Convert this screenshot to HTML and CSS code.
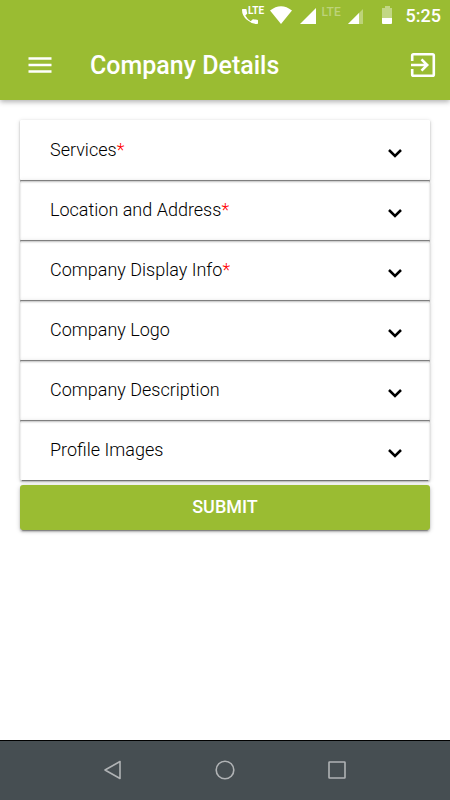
FILE: index.html
```html
<!DOCTYPE html>
<html lang="en">
<head>
<meta charset="utf-8">
<meta name="viewport" content="width=device-width, initial-scale=1">
<title>Company Details</title>
<link rel="stylesheet" href="styles.css">
</head>
<body>
<header class="top">
  <div class="status">
    <svg width="24" height="20" viewBox="0 0 24 20" aria-hidden="true">
      <path fill="#fff" d="M0 4Q0 3 .600 3H3.800Q4.500 3 4.600 3.700Q4.700 5.500 5.200 7Q5.300 7.500 4.900 7.900L3.300 9.600Q5.300 13.300 8.700 15.200L10.500 13.400Q10.900 13 11.400 13.200Q13.100 13.700 15 13.700Q16 13.800 16 14.500V17.200Q16 18 15.200 18Q9.500 18 4.800 13.800Q0 9.500 0 4Z"/>
      <text class="lte-small" x="6" y="8">LTE</text>
    </svg>
    <svg width="22" height="20" viewBox="0 0 22 20" aria-hidden="true"><path fill="#fff" d="M0 4.500Q11-4 22 4.500L11 18Z"/></svg>
    <svg width="18" height="20" viewBox="0 0 18 20" aria-hidden="true"><path fill="#fff" d="M18 2V18H2Z"/></svg>
    <span class="lte">LTE</span>
    <svg width="16" height="20" viewBox="0 0 16 20" aria-hidden="true"><path fill="#fff" fill-opacity=".35" d="M15 3V18H0Z"/><path fill="#fff" d="M11 7V18H0Z"/></svg>
    <svg width="30" height="20" viewBox="0 0 30 20" aria-hidden="true"><path fill="#fff" fill-opacity=".4" d="M15 0H20V2H22V12H12V2H15Z"/><path fill="#fff" d="M12 12H22V17Q22 18 21 18H13Q12 18 12 17Z"/></svg>
    <time class="clock">5:25</time>
  </div>
  <div class="bar">
    <button class="icon-button" type="button" aria-label="Menu">
      <svg width="24" height="24" viewBox="0 0 24 24"><path fill="none" stroke="#fff" stroke-width="2.300" d="M.5 5.500H23.500M.5 12H23.500M.5 18.500H23.500"/></svg>
    </button>
    <h1 class="title">Company Details</h1>
    <button class="icon-button" type="button" aria-label="Log out">
      <svg width="26" height="26" viewBox="0 0 26 26"><path fill="none" stroke="#fff" stroke-width="2.600" stroke-linejoin="round" d="M2.200 9V3.500Q2.200 2.200 3.500 2.200H22.500Q23.800 2.200 23.800 3.500V22.500Q23.800 23.800 22.500 23.800H3.500Q2.200 23.800 2.200 22.500V17"/><path fill="none" stroke="#fff" stroke-width="2.600" d="M1 13H17M11.500 7.300L17.200 13L11.500 18.700"/></svg>
    </button>
  </div>
</header>
<main class="content">
  <button class="row" type="button"><span>Services<span class="required">*</span></span><svg class="chevron" viewBox="0 0 14 10"><path d="M1 1L7 7L13 1"/></svg></button>
  <button class="row" type="button"><span>Location and Address<span class="required">*</span></span><svg class="chevron" viewBox="0 0 14 10"><path d="M1 1L7 7L13 1"/></svg></button>
  <button class="row" type="button"><span>Company Display Info<span class="required">*</span></span><svg class="chevron" viewBox="0 0 14 10"><path d="M1 1L7 7L13 1"/></svg></button>
  <button class="row" type="button"><span>Company Logo</span><svg class="chevron" viewBox="0 0 14 10"><path d="M1 1L7 7L13 1"/></svg></button>
  <button class="row" type="button"><span>Company Description</span><svg class="chevron" viewBox="0 0 14 10"><path d="M1 1L7 7L13 1"/></svg></button>
  <button class="row" type="button"><span>Profile Images</span><svg class="chevron" viewBox="0 0 14 10"><path d="M1 1L7 7L13 1"/></svg></button>
  <button class="submit" type="submit">SUBMIT</button>
</main>
<nav class="system" aria-label="System">
  <button class="key" type="button" aria-label="Back"><svg width="20" height="20" viewBox="0 0 20 20"><path d="M17 1.500V18.500L2 10Z"/></svg></button>
  <button class="key" type="button" aria-label="Home"><svg width="20" height="20" viewBox="0 0 20 20"><circle cx="10" cy="10" r="8.800"/></svg></button>
  <button class="key" type="button" aria-label="Recent apps"><svg width="20" height="20" viewBox="0 0 20 20"><rect x="2" y="2" width="16" height="16" rx=".5"/></svg></button>
</nav>
</body>
</html>
```

FILE: styles.css
```css
* {
  box-sizing: border-box;
}

body {
  display: flex;
  flex-direction: column;
  min-height: 100vh;
  margin: 0;
  background: #fff;
  color: #000;
  font-family: Roboto, "Liberation Sans", sans-serif;
}

button {
  margin: 0;
  padding: 0;
  border: 0;
  background: none;
  color: inherit;
  font: inherit;
}

svg {
  display: block;
  flex: none;
}

.top {
  background: #9abc32;
  color: #fff;
  box-shadow: 0 2px 5px rgba(0, 0, 0, 0.3);
}

.status {
  display: flex;
  justify-content: flex-end;
  align-items: center;
  gap: 6px;
  height: 32px;
  padding: 0 9px;
}

.status svg:first-child {
  margin-right: -2px;
}

.lte-small {
  fill: #fff;
  font-size: 10px;
  font-weight: 700;
}

.lte {
  width: 20px;
  padding-bottom: 8px;
  color: #bdd37a;
  font-size: 12px;
  font-weight: 500;
  line-height: 12px;
}

.clock {
  font-size: 18px;
  font-weight: 500;
  line-height: 20px;
}

.bar {
  display: flex;
  align-items: center;
  height: 68px;
  padding: 0 14px 2px 28px;
}

.title {
  flex: 1;
  margin: 0 0 0 38px;
  padding-top: 2px;
  font-size: 25px;
  font-weight: 500;
  line-height: 30px;
}

.content {
  flex: 1;
  display: flex;
  flex-direction: column;
  padding: 20px;
}

.row {
  display: flex;
  justify-content: space-between;
  align-items: center;
  height: 60px;
  padding: 0 28px 0 30px;
  background: #fff;
  font-size: 18px;
  font-weight: 350;
  line-height: 24px;
  text-align: left;
  border-radius: 1px;
  box-shadow: 0 3px 1px -2px rgba(0, 0, 0, 0.4), 0 1px 2px rgba(0, 0, 0, 0.28), 0 1px 5px rgba(0, 0, 0, 0.14);
}

.row + .row {
  box-shadow: inset 0 1px 0 rgba(0, 0, 0, 0.35), inset 0 2px 2px rgba(0, 0, 0, 0.25), 0 3px 1px -2px rgba(0, 0, 0, 0.4), 0 2px 2px rgba(0, 0, 0, 0.2), 0 1px 5px rgba(0, 0, 0, 0.14);
}

.required {
  color: #f00;
}

.chevron {
  width: 14px;
  height: 10px;
  margin-top: 8px;
  fill: none;
  stroke: #000;
  stroke-width: 2.5;
  overflow: visible;
}

.submit {
  height: 45px;
  margin-top: 5px;
  padding-bottom: 2px;
  border-radius: 3px;
  background: #9abc32;
  color: #fff;
  font-size: 18px;
  font-weight: 500;
  box-shadow: 0 3px 1px -2px rgba(0, 0, 0, 0.3), 0 2px 2px rgba(0, 0, 0, 0.2), 0 1px 5px rgba(0, 0, 0, 0.2);
}

.system {
  display: flex;
  justify-content: center;
  align-items: center;
  gap: 92px;
  height: 60px;
  padding-bottom: 1px;
  border-top: 1px solid #000;
  background: #464e52;
}

.key svg {
  fill: none;
  stroke: #b0b3b5;
  stroke-width: 1.6;
  stroke-linejoin: round;
}
```
